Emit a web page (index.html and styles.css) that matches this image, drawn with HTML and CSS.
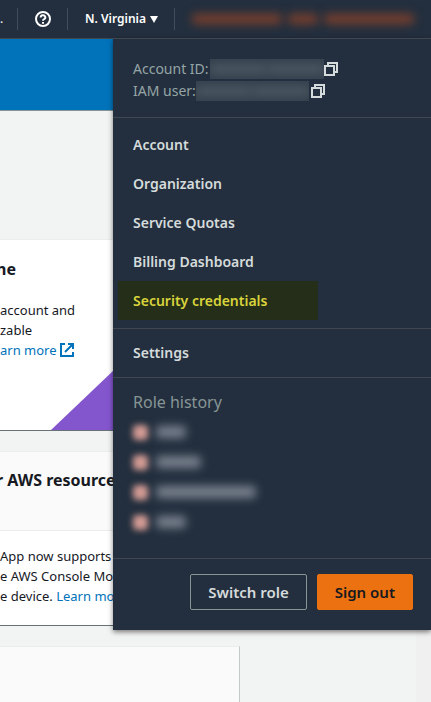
FILE: index.html
```html
<!DOCTYPE html>
<html lang="en">
<head>
<meta charset="utf-8">
<meta name="viewport" content="width=device-width">
<title>AWS Management Console</title>
<link rel="stylesheet" href="styles.css">
</head>
<body>
<header class="topbar">
  <span class="search-end">.</span>
  <button class="nav-button help" aria-label="Help">
    <svg width="16" height="16" viewBox="0 0 16 16" fill="none" stroke="#fff" stroke-width="2"><circle cx="8" cy="8" r="7"/><path d="M5.7 6.4a2.3 2.1 0 1 1 3.4 1.8Q8 8.7 8 9.8M8 11v1.8"/></svg>
  </button>
  <button class="nav-button region">N. Virginia
    <svg width="8" height="7" viewBox="0 0 8 7" fill="#fff"><path d="M0 0h8L4 7z"/></svg>
  </button>
  <button class="nav-button user" aria-label="User menu" aria-expanded="true">
    <span class="smear w90"></span><span class="smear w30"></span><span class="smear w90"></span>
  </button>
  <nav class="account-menu" aria-label="User">
    <div class="identity">
      <div class="identity-row"><span>Account ID:</span><span class="redacted account-id"><i></i><i></i></span>
        <button class="copy" aria-label="Copy account ID"><svg width="14" height="14" viewBox="0 0 14 14" fill="none" stroke="#d5dbdb" stroke-width="2"><path d="M4 3V1h9v9h-2M1 4h9v9H1z"/></svg></button>
      </div>
      <div class="identity-row"><span>IAM user:</span><span class="redacted user-name"><i></i><i></i></span>
        <button class="copy" aria-label="Copy user name"><svg width="14" height="14" viewBox="0 0 14 14" fill="none" stroke="#d5dbdb" stroke-width="2"><path d="M4 3V1h9v9h-2M1 4h9v9H1z"/></svg></button>
      </div>
    </div>
    <div class="links">
      <a href="#">Account</a>
      <a href="#">Organization</a>
      <a href="#">Service Quotas</a>
      <a href="#">Billing Dashboard</a>
      <a href="#" class="highlight">Security credentials</a>
    </div>
    <div class="links settings"><a href="#">Settings</a></div>
    <div class="roles">
      <h2>Role history</h2>
      <ul>
        <li><span class="dot"></span><span class="role w30"></span></li>
        <li><span class="dot"></span><span class="role w45"></span></li>
        <li><span class="dot"></span><span class="role w100"></span></li>
        <li><span class="dot"></span><span class="role w30"></span></li>
      </ul>
    </div>
    <div class="actions">
      <button class="action">Switch role</button>
      <button class="action primary">Sign out</button>
    </div>
  </nav>
</header>
<main>
  <div class="banner"></div>
  <div class="cards">
    <section class="card promo">
      <h2>ne</h2>
      <p>account and<br>zable<br><a href="#">arn more <svg width="14" height="14" viewBox="0 0 14 14" fill="none" stroke="#0073bb" stroke-width="2"><path d="M5 1H1v12h12V9M8 1h5v5M13 1 5 9"/></svg></a></p>
      <svg class="corner" width="63" height="60" viewBox="0 0 63 60"><path d="M0 60 63 0v60z" fill="#8456ce"/></svg>
    </section>
    <section class="card resources">
      <h2>r AWS resources</h2>
      <p>App now supports<br>e AWS Console Mobile<br>e device. <a href="#">Learn more</a></p>
    </section>
    <section class="card empty"></section>
  </div>
</main>
</body>
</html>
```
FILE: styles.css
```css
* { box-sizing: border-box; }
html { min-height: 100%; }
body {
  margin: 0;
  min-height: 100vh;
  overflow: hidden;
  color: #16191f;
  background: linear-gradient(to left, #f0f0f0 15px, #f2f3f3 15px);
  font: 13px/20px "Noto Sans", "Open Sans", sans-serif;
}
h2, p, ul { margin: 0; padding: 0; }
button { margin: 0; border: 0; background: none; color: inherit; font: inherit; }
a { color: #0073bb; text-decoration: none; }
svg { flex: none; }

.topbar {
  position: relative;
  z-index: 1;
  display: flex;
  align-items: center;
  height: 39px;
  color: #fff;
  background: #232f3e;
  border-bottom: 1px solid #414750;
  font-size: 12px;
}
.search-end { width: 17px; }
.nav-button {
  display: flex;
  align-items: center;
  height: 22px;
  padding: 0 17px;
  border-left: 1px solid #414d5c;
}
.help { width: 50px; }
.region { gap: 4px; width: 107px; font-weight: 600; white-space: nowrap; }
.user { flex: 1; gap: 6px; }
.smear { height: 10px; border-radius: 4px; background: #793f2c; filter: blur(5px); }
.w30 { width: 30px; }
.w45 { width: 45px; }
.w90 { width: 90px; }
.w100 { width: 100px; }

.account-menu {
  position: absolute;
  top: 38px;
  left: 113px;
  right: 0;
  color: #95a5a6;
  background: #232f3e;
  border-top: 1px solid #414750;
  box-shadow: 0 2px 5px rgba(0, 0, 0, 0.5);
  font-size: 14px;
}
.identity { padding: 19px 20px 15px; }
.identity-row { display: flex; align-items: center; height: 22px; }
.redacted { display: flex; align-items: center; height: 20px; overflow: hidden; background: #34404d; }
.redacted i { flex: 1; height: 10px; background: #4b5761; filter: blur(5px); }
.account-id { width: 114px; margin-left: 1px; }
.user-name { width: 113px; margin-right: 2px; }
.copy { display: flex; padding: 0; }

.links { padding: 7px 5px 8px; border-top: 1px solid #414750; }
.links a {
  display: block;
  width: 200px;
  padding: 0 15px;
  color: #d5dbdb;
  font-weight: 600;
  line-height: 39px;
}
.links .highlight { color: #d9d43c; background: #252e18; }
.settings { padding: 4px 5px 5px; }
.roles { padding: 12px 20px 21px; border-top: 1px solid #414750; }
.roles h2 { margin-bottom: 3px; color: #879596; font-size: 16px; font-weight: 400; line-height: 24px; }
.roles ul { list-style: none; }
.roles li { display: flex; align-items: center; gap: 8px; height: 30px; }
.dot { width: 15px; height: 15px; border-radius: 4px; background: #d39b94; filter: blur(3px); }
.role { height: 12px; border-radius: 4px; background: #7a828e; filter: blur(5px); }
.actions {
  display: flex;
  justify-content: flex-end;
  gap: 10px;
  padding: 15px 18px 20px;
  border-top: 1px solid #414750;
}
.action {
  height: 36px;
  padding: 0 17px;
  border: 1px solid #879596;
  border-radius: 2px;
  color: #d5dbdb;
  font-size: 15px;
  font-weight: 600;
}
.primary { color: #16191f; background: #ec7211; border-color: #ec7211; }

.banner { height: 72px; background: #0073bb; border-bottom: 1px solid #879596; }
.cards { display: grid; gap: 20px; padding-top: 128px; }
.card {
  width: 55%;
  min-width: 240px;
  overflow: hidden;
  background: #fff;
  border-top: 1px solid #eaeded;
  border-right: 1px solid #c4caca;
  border-bottom: 1px solid #687078;
  white-space: nowrap;
}
.card h2 { font-size: 16px; line-height: 22px; font-weight: 700; text-indent: -4px; }
.promo { position: relative; height: 192px; padding-top: 18px; }
.promo p { padding-top: 20px; }
.promo svg { vertical-align: -2px; }
.corner { position: absolute; left: 51px; bottom: 0; }
.resources { height: 175px; }
.resources h2 { height: 79px; padding-top: 17px; background: #fafafa; border-bottom: 1px solid #eaeded; }
.resources p { padding-top: 15px; }
.empty { height: 80px; background: #fafafa; }
```
